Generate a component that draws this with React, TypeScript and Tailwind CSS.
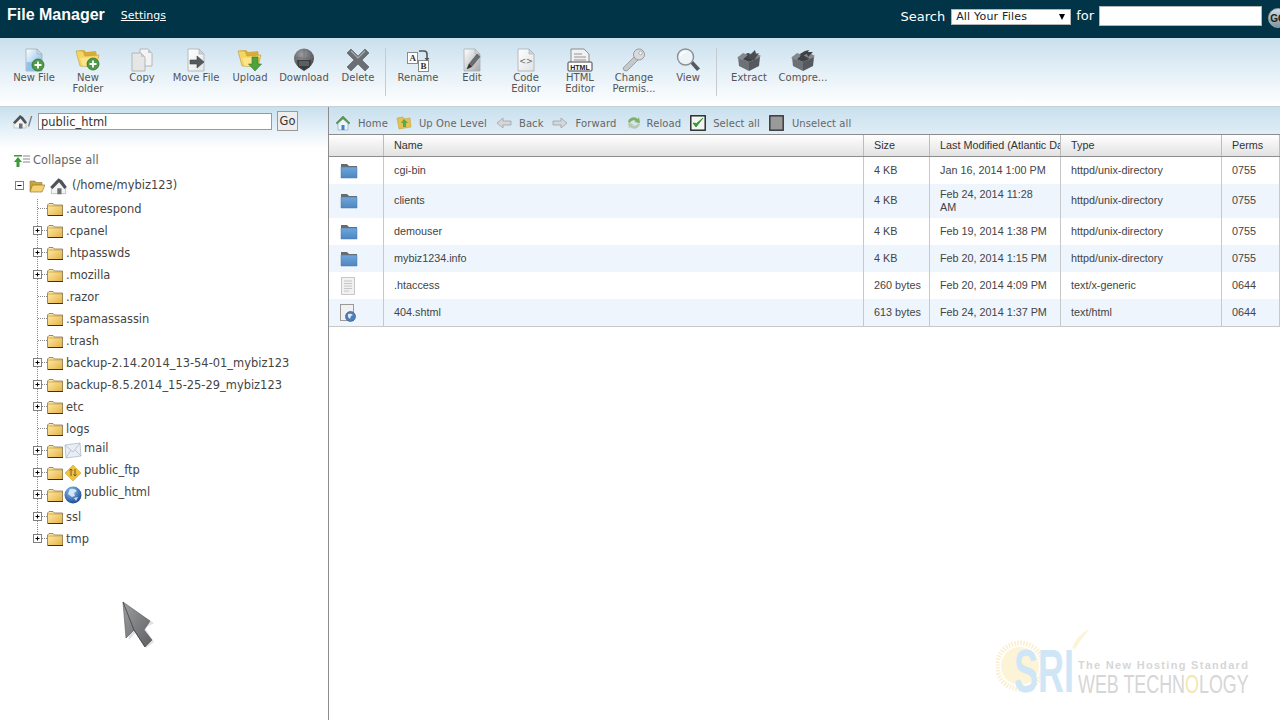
import React from 'react';

const VERDANA = 'font-["DejaVu_Sans",sans-serif]';

function PageIcon({ fill = '#e4e6e8', children }: { fill?: string; children?: React.ReactNode }) {
  const id = `pg${fill.slice(1)}`;
  return (
    <svg width="24" height="24" viewBox="0 0 24 24">
      <defs>
        <linearGradient id={id} x1="0" y1="0" x2="1" y2="1">
          <stop offset="0" stopColor="#ffffff" />
          <stop offset="1" stopColor={fill} />
        </linearGradient>
      </defs>
      <path d="M4 1h11l5 5v17H4z" fill={`url(#${id})`} stroke="#a9adb2" strokeWidth="0.8" />
      <path d="M15 1v5h5z" fill="#d0d4d8" stroke="#a9adb2" strokeWidth="0.6" />
      {children}
    </svg>
  );
}

function PlusBadge({ x, y }: { x: number; y: number }) {
  return (
    <g>
      <circle cx={x} cy={y} r="6" fill="#4f9a46" stroke="#2f6f33" strokeWidth="0.8" />
      <path d={`M${x - 3.5} ${y}h7M${x} ${y - 3.5}v7`} stroke="#fff" strokeWidth="1.8" />
    </g>
  );
}

function FolderOpen({ children }: { children?: React.ReactNode }) {
  return (
    <svg width="26" height="24" viewBox="0 0 26 24">
      <path d="M1 3l8-1 2 2 10-1 1 5-17 1z" fill="#d8ac3c" />
      <path d="M1 3l4 15 16 1 3-12-14 1-2-5z" fill="#f6d560" stroke="#c29a30" strokeWidth="0.6" />
      <path d="M5 10l14-1 2 9H8z" fill="#fbe48c" />
      {children}
    </svg>
  );
}

function ToolIcon({ name }: { name: string }) {
  switch (name) {
    case 'newfile':
      return (
        <PageIcon fill="#6fb1e6">
          <path d="M4.500 14h9v8.500h-9z" fill="#86bce8" opacity="0.8" />
          <PlusBadge x={16} y={17} />
        </PageIcon>
      );
    case 'newfolder':
      return (
        <FolderOpen>
          <PlusBadge x={18} y={16} />
        </FolderOpen>
      );
    case 'copy':
      return (
        <svg width="24" height="24" viewBox="0 0 24 24">
          <path d="M10 1h8l4 4v13H10z" fill="#f3f3f3" stroke="#a8a8a8" strokeWidth="0.8" />
          <path d="M2 5h9l4 4v14H2z" fill="#e6e6e6" stroke="#a8a8a8" strokeWidth="0.8" />
          <path d="M11 5v4h4z" fill="#c8c8c8" />
          <path d="M18 1v4h4z" fill="#c8c8c8" />
        </svg>
      );
    case 'move':
      return (
        <PageIcon>
          <path d="M6 12h7V8l7 6-7 6v-4H6z" fill="#555a5f" stroke="#3e4246" strokeWidth="0.6" />
        </PageIcon>
      );
    case 'upload':
      return (
        <FolderOpen>
          <path d="M15 9h6v7h3.500l-6.500 7-6.500-7H15z" fill="#4fa23c" stroke="#33792b" strokeWidth="0.6" />
        </FolderOpen>
      );
    case 'download':
      return (
        <svg width="24" height="24" viewBox="0 0 24 24">
          <defs>
            <radialGradient id="dl" cx="0.4" cy="0.3" r="0.8">
              <stop offset="0" stopColor="#9c9ea1" />
              <stop offset="1" stopColor="#3f4144" />
            </radialGradient>
          </defs>
          <circle cx="12" cy="10.500" r="10" fill="url(#dl)" />
          <path d="M5 12h14l-1 7-6 4-6-4z" fill="#3a3b3e" />
          <path d="M7 13h10v5H7z" fill="#5c5e61" />
          <path d="M2 9q10 3 20 0M12 1v8" stroke="#6b6d70" strokeWidth="0.7" fill="none" />
        </svg>
      );
    case 'delete':
      return (
        <svg width="24" height="24" viewBox="0 0 24 24">
          <path d="M5 1l7 7 7-7 4 4-7 7 7 7-4 4-7-7-7 7-4-4 7-7-7-7z" fill="#6b6e73" stroke="#55585c" strokeWidth="0.6" />
          <path d="M5 3l7 7 7-7" stroke="#a9acb0" strokeWidth="1.2" fill="none" />
        </svg>
      );
    case 'rename':
      return (
        <svg width="24" height="24" viewBox="0 0 24 24">
          <rect x="1.500" y="4.500" width="10" height="11" fill="#fff" stroke="#8a8a8a" />
          <rect x="12.500" y="12.500" width="10" height="11" fill="#fff" stroke="#8a8a8a" />
          <text x="3.500" y="13" fontSize="9" fontWeight="700" fontFamily="Liberation Serif, serif" fill="#333">A</text>
          <text x="14.500" y="21" fontSize="9" fontWeight="700" fontFamily="Liberation Serif, serif" fill="#333">B</text>
          <path d="M13 3h5q3 0 3 3v5" stroke="#555" strokeWidth="1.6" fill="none" />
          <path d="M18.500 10h5l-2.500 3z" fill="#555" />
        </svg>
      );
    case 'edit':
      return (
        <PageIcon fill="#a6a9ad">
          <path d="M7 21l2-5L17 6l3 2.500-8 10z" fill="#6a6d70" stroke="#4a4c4f" strokeWidth="0.5" />
          <path d="M7 21l2-5 3 2.500z" fill="#2f3032" />
        </PageIcon>
      );
    case 'code':
      return (
        <PageIcon fill="#e0e2e4">
          <text x="12" y="15.500" fontSize="8" textAnchor="middle" fontFamily="DejaVu Sans, sans-serif" fill="#666">{'<>'}</text>
        </PageIcon>
      );
    case 'html':
      return (
        <svg width="26" height="24" viewBox="0 0 26 24">
          <path d="M4 1h13l5 5v12H4z" fill="#f1f1f1" stroke="#777" strokeWidth="0.8" />
          <path d="M7 6h8M7 9h12M7 12h12" stroke="#8a8a8a" strokeWidth="0.9" />
          <rect x="1" y="14" width="24" height="9" rx="1" fill="#fff" stroke="#444" />
          <text x="13" y="21.500" fontSize="7" fontWeight="700" textAnchor="middle" fontFamily="Liberation Sans, sans-serif" fill="#222">HTML</text>
        </svg>
      );
    case 'key':
      return (
        <svg width="26" height="24" viewBox="0 0 26 24">
          <path d="M2 20L14 8l4 3L6 23l-3-.5z" fill="#c6c8ca" stroke="#85888b" strokeWidth="0.7" />
          <circle cx="18" cy="6.500" r="5.500" fill="#d8dadc" stroke="#85888b" strokeWidth="0.8" />
          <circle cx="19.500" cy="5" r="1.700" fill="#fff" stroke="#85888b" strokeWidth="0.6" />
        </svg>
      );
    case 'view':
      return (
        <svg width="26" height="24" viewBox="0 0 26 24">
          <path d="M15 15l3-2 7 7.500-3 2.500z" fill="#55585c" />
          <circle cx="10.500" cy="9" r="8" fill="#eef3f7" stroke="#8c9095" strokeWidth="1.400" />
          <path d="M5 8q2-4 6-4" stroke="#fff" strokeWidth="1.500" fill="none" />
        </svg>
      );
    case 'extract':
    case 'compress':
      return (
        <svg width="26" height="24" viewBox="0 0 26 24">
          <path d="M2 9l11 5v9L3 18z" fill="#6d7074" />
          <path d="M24 9l-11 5v9l10-5z" fill="#55585c" />
          <path d="M2 9l10-4 12 4-11 5z" fill="#3f4245" />
          <path d="M1 10l6-5 5 2-6 5zM25 8l-7-4-5 3 7 4z" fill="#85888c" />
          {name === 'extract' ? (
            <path d="M11 10l8-8 1 4 3-1-5 7z" fill="#4a4d50" />
          ) : (
            <path d="M10 10q0-7 9-8l-1 2 5 0-5 5-1-3q-5 1-4 5z" fill="#3f4245" />
          )}
        </svg>
      );
    default:
      return null;
  }
}

const TOOLS_A = [
  { icon: 'newfile', label: ['New File'] },
  { icon: 'newfolder', label: ['New', 'Folder'] },
  { icon: 'copy', label: ['Copy'] },
  { icon: 'move', label: ['Move File'] },
  { icon: 'upload', label: ['Upload'] },
  { icon: 'download', label: ['Download'] },
  { icon: 'delete', label: ['Delete'] },
];
const TOOLS_B = [
  { icon: 'rename', label: ['Rename'] },
  { icon: 'edit', label: ['Edit'] },
  { icon: 'code', label: ['Code', 'Editor'] },
  { icon: 'html', label: ['HTML', 'Editor'] },
  { icon: 'key', label: ['Change', 'Permis...'] },
  { icon: 'view', label: ['View'] },
];
const TOOLS_C = [
  { icon: 'extract', label: ['Extract'] },
  { icon: 'compress', label: ['Compre...'] },
];

function Tool({ icon, label }: { icon: string; label: string[] }) {
  return (
    <div className="flex w-[54px] flex-col items-center">
      <div className="flex h-[24px] items-center justify-center">
        <ToolIcon name={icon} />
      </div>
      <div className="whitespace-nowrap text-center text-[10px] leading-[11px] text-[#555]">
        {label.map((l) => (
          <div key={l}>{l}</div>
        ))}
      </div>
    </div>
  );
}

function Separator({ className = '' }: { className?: string }) {
  return <div className={`mr-[5px] h-[48px] w-px bg-[#c4ccd2] ${className}`} />;
}

function SmallHome() {
  return (
    <svg width="16" height="16" viewBox="0 0 16 16">
      <path d="M8 1L1 8l1.500 1L8 4l5.500 5L15 8z" fill="#5b9a4a" stroke="#3f7a35" strokeWidth="0.5" />
      <path d="M3 8.500L8 4l5 4.500V15H3z" fill="#eef4fa" stroke="#6a94b8" strokeWidth="0.5" />
      <rect x="6.500" y="10" width="3" height="5" fill="#3f86c8" />
    </svg>
  );
}

function GrayHome({ size = 16 }: { size?: number }) {
  return (
    <svg width={size} height={size} viewBox="0 0 16 16">
      <path d="M2 14V8L8 3l6 5v6z" fill="#f4f4f4" stroke="#a0a0a0" strokeWidth="0.5" />
      <path d="M8 1L1 8.500 3 10 8.500 4.500 13 10l2-1.500L11 3z" fill="#4f5256" />
      <rect x="7" y="9.500" width="3.500" height="5" fill="#6d6f72" />
    </svg>
  );
}

function AddressBar() {
  return (
    <div className={`flex h-[27px] items-center pl-[6px] pt-[5px] text-[10px] tracking-[0.1px] text-[#666] ${VERDANA}`}>
      <SmallHome />
      <span className="ml-[7px]">Home</span>
      <svg className="ml-[8px]" width="16" height="16" viewBox="0 0 16 16">
        <path d="M1 3l6-1 1 2 6-1 1 9-12 2z" fill="#e3c253" stroke="#b99a34" strokeWidth="0.5" />
        <path d="M8 4l4 4H10v4H7V8H5z" fill="#62a544" />
      </svg>
      <span className="ml-[7px]">Up One Level</span>
      <svg className="ml-[9px]" width="16" height="12" viewBox="0 0 16 12">
        <path d="M1 6l6-5v3h8v4H7v3z" fill="#d5d6d8" stroke="#9a9ca0" strokeWidth="0.7" />
      </svg>
      <span className="ml-[7px]">Back</span>
      <svg className="ml-[8px]" width="16" height="12" viewBox="0 0 16 12">
        <path d="M15 6L9 1v3H1v4h8v3z" fill="#d5d6d8" stroke="#9a9ca0" strokeWidth="0.7" />
      </svg>
      <span className="ml-[8px]">Forward</span>
      <svg className="ml-[9px]" width="16" height="16" viewBox="0 0 16 16">
        <path d="M2 7a6 6 0 0 1 10-3l1-2 1 6-6-1 2-1a4 4 0 0 0-6 2z" fill="#7fb069" />
        <path d="M14 9a6 6 0 0 1-10 3l-1 2-1-6 6 1-2 1a4 4 0 0 0 6-2z" fill="#b9c9b0" />
      </svg>
      <span className="ml-[5px]">Reload</span>
      <svg className="ml-[9px]" width="16" height="16" viewBox="0 0 16 16">
        <rect x="0.800" y="0.800" width="14.400" height="14.400" fill="#f2f6f2" stroke="#222" strokeWidth="1.400" />
        <path d="M3 8l3 4 7-9-6.500 5.500z" fill="#3a9a33" stroke="#2e8a2a" strokeWidth="0.8" />
      </svg>
      <span className="ml-[7px]">Select all</span>
      <svg className="ml-[9px]" width="15" height="16" viewBox="0 0 15 16">
        <rect x="0.800" y="0.800" width="13.400" height="14.400" fill="#9a9a9a" stroke="#333" strokeWidth="1.400" />
      </svg>
      <span className="ml-[8px]">Unselect all</span>
    </div>
  );
}

function TreeFolder({ open }: { open?: boolean }) {
  if (open) {
    return (
      <svg width="16" height="14" viewBox="0 0 16 14">
        <path d="M1 2h5l1 1.500h6v3H3L1 12z" fill="#c9a53f" stroke="#8a6d1f" strokeWidth="0.5" />
        <path d="M3.500 6H16l-3 7H1z" fill="#f4d270" stroke="#8a6d1f" strokeWidth="0.6" />
      </svg>
    );
  }
  return (
    <svg width="16" height="13" viewBox="0 0 16 13">
      <defs>
        <linearGradient id="tf" x1="0" y1="0" x2="1" y2="1">
          <stop offset="0" stopColor="#fff0b0" />
          <stop offset="1" stopColor="#e6b040" />
        </linearGradient>
      </defs>
      <path d="M.500 2L2 .500h4L7.500 2h8v10.500H.500z" fill="url(#tf)" stroke="#5e4a1c" strokeWidth="0.6" />
      <path d="M1 3h14" stroke="#c9a042" strokeWidth="0.8" />
      <path d="M1 12.500h15" stroke="#3d3214" strokeWidth="1" />
    </svg>
  );
}

// expander cell: dotted connector plus optional +/- box
function Connector({ plus, last }: { plus?: boolean; last?: boolean }) {
  const mid = 11;
  return (
    <svg width="14" height="22" viewBox="0 0 14 22" className="shrink-0">
      <path d={`M4.500 0V${last ? mid : 22}`} stroke="#888" strokeDasharray="1 1" />
      <path d={`M5 ${mid - 1.5}H14`} stroke="#888" strokeDasharray="1 1" />
      {plus && (
        <g>
          <rect x="0.500" y={mid - 5.5} width="8" height="8" fill="#fff" stroke="#808080" />
          <path d={`M2.500 ${mid - 1.5}h4M4.500 ${mid - 3.5}v4`} stroke="#000" />
        </g>
      )}
    </svg>
  );
}

function MailIcon() {
  return (
    <svg width="18" height="18" viewBox="0 0 18 18" className="shrink-0">
      <path d="M1 3l15-2 1 13-15 2z" fill="#e8eef5" stroke="#a6b2c0" strokeWidth="0.7" />
      <path d="M1 3l8 7 7-9M2 16l5-8M17 14l-6-6" stroke="#aab6c4" strokeWidth="0.7" fill="none" />
    </svg>
  );
}

function FtpIcon() {
  return (
    <svg width="18" height="18" viewBox="0 0 18 18" className="shrink-0">
      <path d="M9 1l8 8-8 8-8-8z" fill="#f0c040" stroke="#d8a52a" strokeWidth="0.6" />
      <path d="M7 5v7M5.500 6.500L7 5l1.500 1.500M11 12V5M9.500 10.500L11 12l1.500-1.500" stroke="#6b5a1a" strokeWidth="1" fill="none" />
    </svg>
  );
}

function GlobeIcon({ size = 18 }: { size?: number }) {
  return (
    <svg width={size} height={size} viewBox="0 0 18 18" className="shrink-0">
      <defs>
        <radialGradient id="gl" cx="0.4" cy="0.3" r="0.8">
          <stop offset="0" stopColor="#8cc4f0" />
          <stop offset="1" stopColor="#0f3a8c" />
        </radialGradient>
      </defs>
      <circle cx="9" cy="9" r="8.500" fill="url(#gl)" />
      <path d="M6 3q5-1 7 2l-3 2 1 3-3 1-4-3zM10 12l4-1-2 4z" fill="#e4eef8" opacity="0.85" />
    </svg>
  );
}

const TREE: { name: string; plus?: boolean; extra?: React.ReactNode }[] = [
  { name: '.autorespond' },
  { name: '.cpanel', plus: true },
  { name: '.htpasswds', plus: true },
  { name: '.mozilla', plus: true },
  { name: '.razor' },
  { name: '.spamassassin' },
  { name: '.trash' },
  { name: 'backup-2.14.2014_13-54-01_mybiz123', plus: true },
  { name: 'backup-8.5.2014_15-25-29_mybiz123', plus: true },
  { name: 'etc', plus: true },
  { name: 'logs' },
  { name: 'mail', plus: true, extra: <MailIcon /> },
  { name: 'public_ftp', plus: true, extra: <FtpIcon /> },
  { name: 'public_html', plus: true, extra: <GlobeIcon /> },
  { name: 'ssl', plus: true },
  { name: 'tmp', plus: true },
];

function Tree() {
  return (
    <div className={`text-[11.450px] text-[#444] ${VERDANA}`}>
      <div className="flex h-[24px] items-center pl-[14px]">
        <svg width="16" height="14" viewBox="0 0 16 14">
          <path d="M0 1h8v1.500H0z" fill="#3a9a33" />
          <path d="M4 3l4 5H5.500v5h-3V8H0z" fill="#3a9a33" />
          <path d="M9 2h7M9 5h7M9 8h7" stroke="#888" />
        </svg>
        <span className="ml-[3px] text-[#666]">Collapse all</span>
      </div>
      <div className="mb-[1px] mt-[1px] flex h-[24px] items-center pl-[15px]">
        <svg width="9" height="10" viewBox="0 0 9 10" className="shrink-0">
          <rect x="0.500" y="0.500" width="8" height="8" fill="#fff" stroke="#808080" />
          <path d="M2.500 4.500h4" stroke="#000" />
        </svg>
        <span className="ml-[5px] flex">
          <TreeFolder open />
        </span>
        <span className="ml-[4px] flex">
          <GrayHome size={19} />
        </span>
        <span className="ml-[4px]">(/home/mybiz123)</span>
      </div>
      <div className="pl-[33px]">
        {TREE.map((t, i) => (
          <div key={t.name} className="flex h-[22px] items-center">
            <Connector plus={t.plus} last={i === TREE.length - 1} />
            <span className="-mt-[1px] flex shrink-0">
              <TreeFolder />
            </span>
            {t.extra && <span className="-mt-[2px] ml-[1px] flex">{t.extra}</span>}
            <span className={t.extra ? 'ml-[2px] -mt-[6px] whitespace-nowrap' : 'ml-[3px] -mt-[1px] whitespace-nowrap'}>{t.name}</span>
          </div>
        ))}
      </div>
    </div>
  );
}

function RowIcon({ kind }: { kind: string }) {
  if (kind === 'dir') {
    return (
      <svg width="18" height="16" viewBox="0 0 18 16">
        <defs>
          <linearGradient id="rd" x1="0" y1="0" x2="0" y2="1">
            <stop offset="0" stopColor="#6ea6dc" />
            <stop offset="1" stopColor="#4f86c0" />
          </linearGradient>
        </defs>
        <path d="M1 1h6l2 2h8v12H1z" fill="#6a6a6a" />
        <path d="M1 4h16v11H1z" fill="url(#rd)" stroke="#4a78a8" strokeWidth="0.5" />
      </svg>
    );
  }
  if (kind === 'text') {
    return (
      <svg width="16" height="18" viewBox="0 0 16 18">
        <rect x="1.500" y="0.500" width="13" height="17" fill="#f1f1f1" stroke="#c8c8c8" />
        <path d="M4 4h8M4 6.500h8M4 9h8M4 11.500h8M4 14h5" stroke="#c4c4c4" />
      </svg>
    );
  }
  return (
    <svg width="17" height="18" viewBox="0 0 17 18">
      <rect x="0.500" y="0.500" width="13" height="16" fill="#f1f1f1" stroke="#9a9a9a" />
      <circle cx="10.500" cy="12.500" r="5" fill="#4f7fb8" stroke="#2d5388" strokeWidth="0.6" />
      <path d="M8 10q3-1 5 1l-2 1-1 3-2-2z" fill="#dfe9f4" />
    </svg>
  );
}

const FILES = [
  { kind: 'dir', name: 'cgi-bin', size: '4 KB', date: ['Jan 16, 2014 1:00 PM'], type: 'httpd/unix-directory', perms: '0755', h: 'h-[27px]' },
  { kind: 'dir', name: 'clients', size: '4 KB', date: ['Feb 24, 2014 11:28', 'AM'], type: 'httpd/unix-directory', perms: '0755', h: 'h-[34px] [&>div]:pb-[1px]' },
  { kind: 'dir', name: 'demouser', size: '4 KB', date: ['Feb 19, 2014 1:38 PM'], type: 'httpd/unix-directory', perms: '0755', h: 'h-[27px]' },
  { kind: 'dir', name: 'mybiz1234.info', size: '4 KB', date: ['Feb 20, 2014 1:15 PM'], type: 'httpd/unix-directory', perms: '0755', h: 'h-[27px]' },
  { kind: 'text', name: '.htaccess', size: '260 bytes', date: ['Feb 20, 2014 4:09 PM'], type: 'text/x-generic', perms: '0644', h: 'h-[27px]' },
  { kind: 'html', name: '404.shtml', size: '613 bytes', date: ['Feb 24, 2014 1:37 PM'], type: 'text/html', perms: '0644', h: 'h-[27px]' },
];

const COLS = 'grid-cols-[55px_480px_66px_131px_161px_58px]';

function FileTable() {
  return (
    <div className={`font-["Liberation_Sans",Arial,sans-serif] text-[10.800px] text-[#444]`}>
      <div className={`grid ${COLS} h-[23px] border-y border-[#8c8c8c] bg-gradient-to-b from-white to-[#e2e2e2] text-[#333] [&>div]:flex [&>div]:items-center [&>div]:border-r [&>div]:border-[#bdbdbd] [&>div]:pl-[10px]`}>
        <div />
        <div>Name</div>
        <div>Size</div>
        <div className="overflow-hidden whitespace-nowrap">Last Modified (Atlantic Daylight Time)</div>
        <div>Type</div>
        <div>Perms</div>
      </div>
      {FILES.map((f, i) => (
        <div
          key={f.name}
          className={`grid ${COLS} ${f.h} ${i % 2 === 1 ? 'bg-[#eef5fc]' : 'bg-white'} [&>div]:flex [&>div]:items-center [&>div]:border-r [&>div]:border-[#c8c8c8] [&>div]:pl-[10px]`}
        >
          <div className="!pl-[11px]">
            <RowIcon kind={f.kind} />
          </div>
          <div>{f.name}</div>
          <div>{f.size}</div>
          <div className="leading-[13px]">
            <span>
              {f.date.map((d) => (
                <span key={d} className="block">
                  {d}
                </span>
              ))}
            </span>
          </div>
          <div>{f.type}</div>
          <div>{f.perms}</div>
        </div>
      ))}
      <div className="h-px bg-[#c8c8c8]" />
    </div>
  );
}

function Watermark() {
  return (
    <div className="pointer-events-none absolute left-[996px] top-[628px] h-[72px] w-[270px] select-none">
      <svg width="100" height="72" viewBox="0 0 100 72" className="absolute left-0 top-0">
        <circle cx="24" cy="38" r="23" fill="none" stroke="#fbeecb" strokeWidth="5" strokeDasharray="1.500 1.500" />
        <circle cx="24" cy="38" r="19" fill="#fdf3d6" />
        <path d="M76 20q4-12 18-20-8 10-15 21z" fill="#fdf3d6" />
      </svg>
      <div className="absolute left-[18px] top-[12px] origin-left whitespace-nowrap font-['Liberation_Sans',sans-serif] text-[62px] font-bold leading-[62px] text-[#cfe6f6] [transform:scaleX(0.58)]">SRI</div>
      <div className="absolute left-[82px] top-[29px] whitespace-nowrap font-['Liberation_Sans',sans-serif] text-[11px] font-bold tracking-[1.300px] text-[#d6d6d6]">The New Hosting Standard</div>
      <div className="absolute left-[82px] top-[42px] origin-left whitespace-nowrap font-['Liberation_Sans',sans-serif] text-[26px] leading-[28px] text-[#d6d6d6] [transform:scaleX(0.688)]">
        WEB TECHN<span className="text-[#f5e6b0]">O</span>LOGY
      </div>
    </div>
  );
}

function Cursor() {
  return (
    <svg width="38" height="54" viewBox="0 0 38 54" className="pointer-events-none absolute left-[120px] top-[599px]">
      <defs>
        <linearGradient id="cur" x1="0" y1="0" x2="1" y2="1">
          <stop offset="0" stopColor="#9c9ea0" />
          <stop offset="1" stopColor="#5d5f62" />
        </linearGradient>
      </defs>
      <path d="M6 6l3 35 8-9 9 17 8-6-9-14 9-5z" fill="#c4c4c4" opacity="0.5" />
      <path d="M3 3l3 36 8-8 11 17 7-7-8-10 6-9z" fill="url(#cur)" stroke="#55575a" strokeWidth="0.6" />
      <path d="M3 3l11 28 11 17" stroke="#3f4144" strokeWidth="0.8" fill="none" />
    </svg>
  );
}

export default function App() {
  return (
    <div className={`relative h-[720px] w-[1280px] overflow-hidden bg-white ${VERDANA}`}>
      <header className="flex h-[38px] items-start bg-[#003446] text-white">
        <h1 className="ml-[7px] mt-[5px] font-['Liberation_Sans',sans-serif] text-[16px] font-bold leading-[20px]">File Manager</h1>
        <a className="ml-[16px] mt-[9px] text-[11px] leading-[14px] underline">Settings</a>
        <div className="ml-auto flex items-start pt-[6px]">
          <span className="mt-[1px] text-[13px] leading-[20px]">Search</span>
          <div className="ml-[6px] mt-[3px] flex h-[16px] w-[120px] items-center justify-between border border-[#b5b5b5] bg-white pl-[4px] pr-[5px] text-[11px] tracking-[0.2px] text-[#222]">
            <span>All Your Files</span>
            <span className="h-0 w-0 border-x-[3.500px] border-t-[6px] border-x-transparent border-t-black" />
          </div>
          <span className="ml-[5px] text-[13px] leading-[20px]">for</span>
          <div className="ml-[5px] h-[20px] w-[163px] border border-[#b5b5b5] bg-white" />
          <div className="ml-[6px] mt-[2px] flex h-[20px] w-[12px] overflow-hidden">
            <div className="flex h-[20px] w-[20px] shrink-0 items-center justify-center rounded-full border border-[#8fa6b0] bg-gradient-to-b from-[#d5dee2] to-[#7c96a1] font-['Liberation_Sans',sans-serif] text-[10px] font-bold text-[#222]">GO</div>
          </div>
        </div>
      </header>

      <div className="flex h-[68px] items-start bg-gradient-to-b from-[#c9e0ee] via-[#eaf3f9] via-60% to-white pl-[7px] pt-[10px]">
        {TOOLS_A.map((t) => (
          <Tool key={t.icon} {...t} />
        ))}
        <Separator />
        {TOOLS_B.map((t) => (
          <Tool key={t.icon} {...t} />
        ))}
        <Separator className="ml-[1px]" />
        {TOOLS_C.map((t) => (
          <Tool key={t.icon} {...t} />
        ))}
      </div>

      <div className="flex h-[614px] border-t border-[#c8d0d6]">
        <aside className="w-[329px] shrink-0 border-r border-[#8c8c8c]">
          <div className="flex h-[42px] items-start bg-gradient-to-b from-[#c9e0ee] via-[#e4f0f8] to-white pl-[12px] pt-[4px]">
            <span className="mt-[3px] flex">
              <GrayHome />
            </span>
            <span className="mt-[2px] text-[12px] leading-[16px] text-[#555]">/</span>
            <div className="ml-[6px] mt-[2px] flex h-[17px] w-[234px] items-center border border-[#999] bg-white pl-[2px] pt-[2px] text-[11.450px] text-[#333]">public_html</div>
            <div className="ml-[5px] flex h-[20px] w-[21px] items-center justify-center border border-[#999] bg-[#eee] pt-[1px] text-[11.450px] text-[#333]">Go</div>
          </div>
          <Tree />
        </aside>
        <main className="min-w-0 flex-1">
          <div className="bg-gradient-to-b from-[#c9e0ee] to-[#dfedf6]">
            <AddressBar />
          </div>
          <FileTable />
        </main>
      </div>

      <Cursor />
      <Watermark />
    </div>
  );
}
